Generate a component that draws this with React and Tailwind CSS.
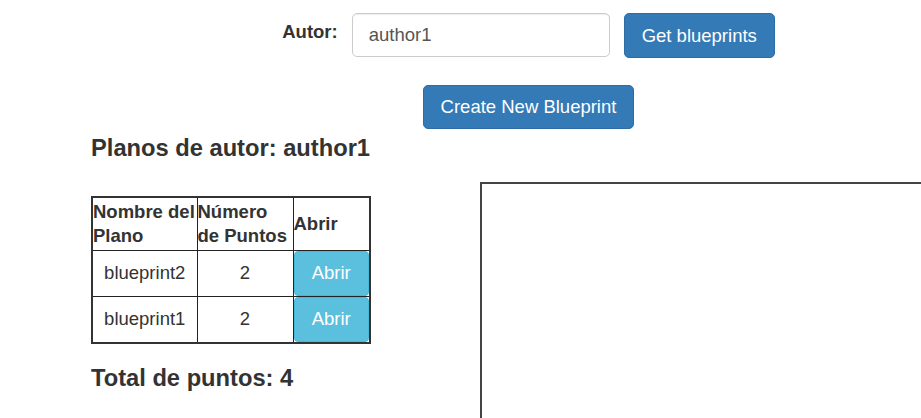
export default function App() {
  const rows = [
    { name: "blueprint2", points: 2 },
    { name: "blueprint1", points: 2 },
  ];
  return (
    <div
      className="w-[921px] h-[418px] overflow-hidden bg-white text-[#333]"
      style={{ fontFamily: '"Liberation Sans", Arial, sans-serif' }}
    >
      <div className="flex flex-col items-center pt-[13px] pl-[136px]">
        <div className="flex items-start">
          <label className="mt-[6px] text-[18.5px] leading-[26px] font-bold text-[#333]">
            Autor:
          </label>
          <input
            readOnly
            value="author1"
            className="ml-[14px] w-[258px] h-[44px] rounded-[5px] border border-[#ccc] bg-white pl-[16px] text-[18.5px] text-[#555] outline-none shadow-[inset_0_1px_1px_rgba(0,0,0,0.075)]"
          />
          <button className="ml-[14px] w-[151px] h-[45px] rounded-[5px] border border-[#2e6da4] bg-[#337ab7] text-[18.5px] text-white">
            Get blueprints
          </button>
        </div>
        <button className="mt-[27px] w-[211px] h-[44px] rounded-[5px] border border-[#2e6da4] bg-[#337ab7] text-[18.5px] text-white">
          Create New Blueprint
        </button>
      </div>

      <div className="flex mt-[6px]">
        <div className="ml-[91px] w-[389px] shrink-0">
          <h4 className="text-[23.7px] leading-[26px] font-bold text-[#333]">
            Planos de autor: author1
          </h4>
          <table className="mt-[35px] border-collapse border-2 border-[#333] text-[18.5px] leading-[24px] table-fixed w-[278px]">
            <thead>
              <tr className="h-[53px]">
                <th className="w-[105px] border border-[#222] p-0 text-left align-middle font-bold">
                  Nombre del Plano
                </th>
                <th className="w-[96px] border border-[#222] p-0 text-left align-middle font-bold">
                  Número de Puntos
                </th>
                <th className="w-[77px] border border-[#222] p-0 text-left align-middle font-bold">
                  Abrir
                </th>
              </tr>
            </thead>
            <tbody>
              {rows.map((r) => (
                <tr key={r.name} className="h-[46px]">
                  <td className="border border-[#222] p-0 text-center align-middle text-[#333]">
                    {r.name}
                  </td>
                  <td className="border border-[#222] p-0 text-center align-middle text-[#333]">
                    {r.points}
                  </td>
                  <td className="border border-[#222] p-0 align-middle">
                    <button className="block w-full h-[45px] rounded-[4px] border border-[#46b8da] bg-[#5bc0de] text-[18.5px] text-white">
                      Abrir
                    </button>
                  </td>
                </tr>
              ))}
            </tbody>
          </table>
          <h4 className="mt-[21px] text-[23.7px] leading-[26px] font-bold text-[#333]">
            Total de puntos: 4
          </h4>
        </div>
        <div className="mt-[47px] shrink-0 w-[600px] h-[400px] border-2 border-[#444] bg-white" />
      </div>
    </div>
  );
}
